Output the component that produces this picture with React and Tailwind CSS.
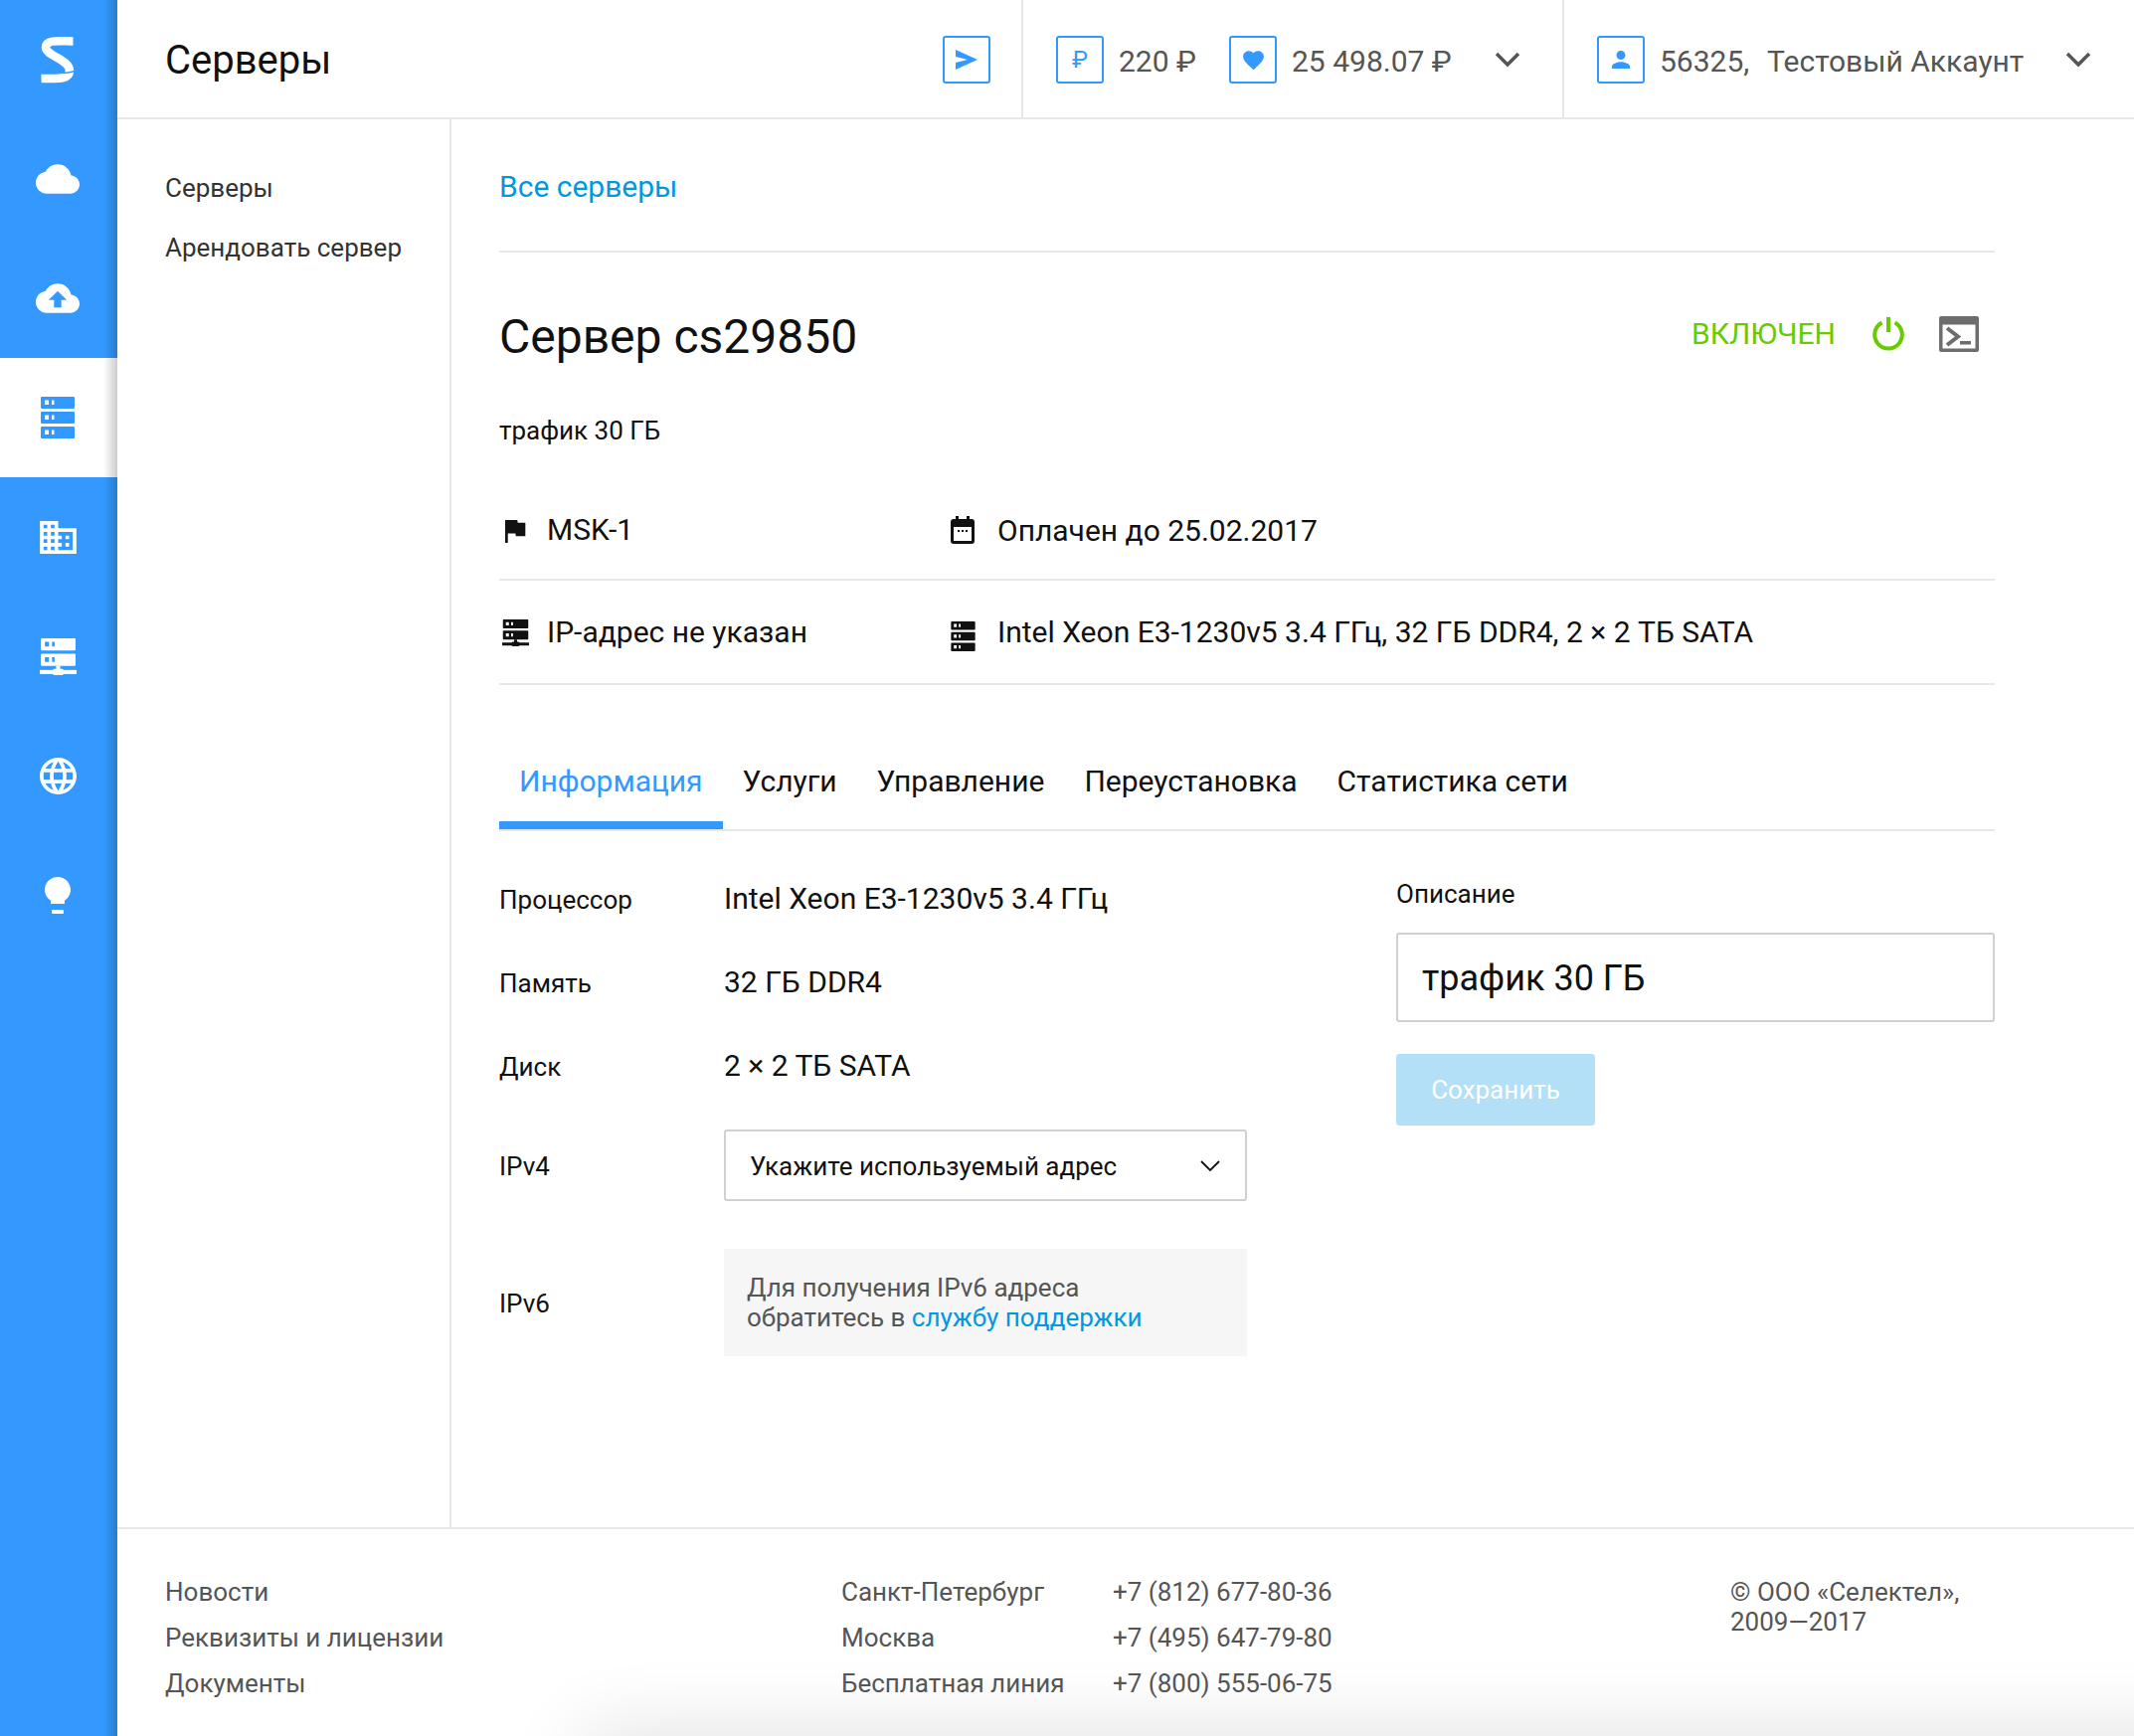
import React from "react";

const CLOUD = "M19.35 10.04C18.67 6.59 15.64 4 12 4 9.11 4 6.6 5.64 5.35 8.04 2.34 8.36 0 10.91 0 14c0 3.31 2.69 6 6 6h13c2.76 0 5-2.24 5-5 0-2.64-2.05-4.78-4.65-4.96z";
const bar = (y) => `M1 ${y}h32a1 1 0 0 1 1 1v10a1 1 0 0 1-1 1H1a1 1 0 0 1-1-1V${y + 1}a1 1 0 0 1 1-1z M4 ${y + 3.5}v4.5h4v-4.5z M11 ${y + 3.5}v4.5h2.5v-4.5z`;

function Dns({ className }) {
  return (
    <svg viewBox="0 0 34 42" className={className} fill="currentColor">
      <path fillRule="evenodd" d={`${bar(0)} ${bar(15)} ${bar(30)}`} />
    </svg>
  );
}
function Lan({ className }) {
  return (
    <svg viewBox="0 0 36 36" className={className} fill="currentColor">
      <path fillRule="evenodd" d={bar(0)} transform="translate(1 0)" />
      <path fillRule="evenodd" d={bar(15)} transform="translate(1 0)" />
      <rect x="16" y="27" width="4" height="5" />
      <rect x="0" y="31" width="36" height="4" />
      <rect x="13" y="30" width="10" height="6" rx="1" />
    </svg>
  );
}
function Side({ children, active }) {
  return (
    <div className={`h-[120px] pr-[2px] flex items-center justify-center ${active ? "bg-white text-[#3399ff]" : "text-white"}`}>
      {children}
    </div>
  );
}
function Box({ children }) {
  return (
    <div className="w-[48px] h-[48px] border-2 border-[#3399ff] rounded-[3px] flex items-center justify-center text-[#3399ff] shrink-0">
      {children}
    </div>
  );
}
function Chevron({ className }) {
  return (
    <svg viewBox="0 0 26 16" className={className} fill="none" stroke="#555555" strokeWidth="3.4">
      <path d="M2 2l11 11L24 2" />
    </svg>
  );
}
function InfoRow({ label, value }) {
  return (
    <div className="flex items-center h-[84px]">
      <div className="w-[226px] text-[26px] pt-[1px]">{label}</div>
      <div className="text-[30px] pb-[4px]">{value}</div>
    </div>
  );
}

export default function App() {
  return (
    <div className="flex w-[2146px] h-[1746px] overflow-hidden bg-white text-[#111111] font-[Roboto,sans-serif]">
      <aside className="relative w-[118px] shrink-0 bg-[#3399ff]">
        <Side>
          <svg viewBox="0 0 34 48" className="w-[34px] h-[48px]" fill="none" stroke="white" strokeWidth="8.5">
            <path d="M32.500 5.500C22 5.500 5 3 5 11.500 5 20 29 24 29 35 29 45 14 42.500 0.500 43" />
            <path d="M20 37.500C25 37.500 30 37 34 35.500" stroke="#3399ff" strokeWidth="1.600" />
          </svg>
        </Side>
        <Side>
          <svg viewBox="0 0 24 24" className="w-[44px] h-[44px]" fill="currentColor"><path d={CLOUD} /></svg>
        </Side>
        <Side>
          <svg viewBox="0 0 24 24" className="w-[44px] h-[44px]" fill="currentColor"><path fillRule="evenodd" d={`${CLOUD} M14 13v4h-4v-4H7l5-5 5 5h-3z`} /></svg>
        </Side>
        <Side active>
          <Dns className="w-[34px] h-[42px]" />
        </Side>
        <Side>
          <svg viewBox="2 3 20 18" className="w-[37px] h-[33px]" fill="currentColor"><path d="M12 7V3H2v18h20V7H12zM6 19H4v-2h2v2zm0-4H4v-2h2v2zm0-4H4V9h2v2zm0-4H4V5h2v2zm4 12H8v-2h2v2zm0-4H8v-2h2v2zm0-4H8V9h2v2zm0-4H8V5h2v2zm10 12h-8v-2h2v-2h-2v-2h2v-2h-2V9h8v10zm-2-8h-2v2h2v-2zm0 4h-2v2h2v-2z" /></svg>
        </Side>
        <Side>
          <Lan className="w-[37px] h-[37px]" />
        </Side>
        <Side>
          <svg viewBox="2 2 20 20" className="w-[37px] h-[37px]" fill="currentColor"><path d="M11.99 2C6.47 2 2 6.48 2 12s4.47 10 9.99 10C17.52 22 22 17.52 22 12S17.52 2 11.99 2zm6.93 6h-2.95c-.32-1.25-.78-2.45-1.38-3.56 1.84.63 3.37 1.91 4.33 3.56zM12 4.04c.83 1.2 1.48 2.53 1.91 3.96h-3.82c.43-1.43 1.08-2.76 1.91-3.96zM4.26 14C4.1 13.36 4 12.69 4 12s.1-1.36.26-2h3.38c-.08.66-.14 1.32-.14 2 0 .68.06 1.34.14 2H4.26zm.82 2h2.95c.32 1.25.78 2.45 1.38 3.56-1.84-.63-3.37-1.9-4.33-3.56zm2.95-8H5.08c.96-1.66 2.49-2.93 4.33-3.56C8.81 5.55 8.35 6.75 8.03 8zM12 19.96c-.83-1.2-1.48-2.53-1.91-3.96h3.82c-.43 1.43-1.08 2.76-1.91 3.96zM14.34 14H9.66c-.09-.66-.16-1.32-.16-2 0-.68.07-1.35.16-2h4.68c.09.65.16 1.32.16 2 0 .68-.07 1.34-.16 2zm.25 5.56c.6-1.11 1.06-2.31 1.38-3.56h2.95c-.96 1.65-2.49 2.93-4.33 3.56zM16.36 14c.08-.66.14-1.32.14-2 0-.68-.06-1.34-.14-2h3.38c.16.64.26 1.31.26 2s-.1 1.36-.26 2h-3.38z" /></svg>
        </Side>
        <Side>
          <svg viewBox="0 0 26 37" className="w-[26px] h-[37px]" fill="currentColor">
            <path d="M13 0C5.800 0 0 5.800 0 13c0 4.500 2.400 8.300 6 10.600V27h14v-3.400c3.600-2.300 6-6.100 6-10.600C26 5.800 20.200 0 13 0z" />
            <rect x="7" y="33" width="12" height="4" rx="1" />
          </svg>
        </Side>
        <div className="absolute inset-y-0 right-0 w-[14px] bg-linear-to-l from-black/20 to-transparent" />
      </aside>

      <div className="flex-1 flex flex-col min-w-0">
        <header className="h-[120px] shrink-0 border-b-2 border-[#e8e8e8] flex items-stretch text-[#555555]">
          <div className="w-[911px] flex items-center justify-between pl-[48px] pr-[31px] border-r-2 border-[#e8e8e8]">
            <div className="text-[40px] text-[#111111] pt-[4px]">Серверы</div>
            <div className="pt-[2px]">
              <Box>
                <svg viewBox="0 0 22 22" className="w-[22px] h-[22px]" fill="currentColor"><path d="M0 1l22 10L0 21l0-7 12-3L0 8z" /></svg>
              </Box>
            </div>
          </div>
          <div className="w-[544px] flex items-center pl-[33px] pt-[2px] border-r-2 border-[#e8e8e8]">
            <Box><span className="text-[24px] leading-none">₽</span></Box>
            <div className="ml-[15px] w-[111px] text-[30px] whitespace-nowrap pt-[3px]">220 ₽</div>
            <Box>
              <svg viewBox="0 0 24 24" className="w-[25px] h-[25px]" fill="currentColor"><path d="M12 21.350l-1.450-1.320C5.400 15.360 2 12.280 2 8.500 2 5.420 4.420 3 7.500 3c1.740 0 3.410.81 4.500 2.090C13.090 3.810 14.760 3 16.500 3 19.580 3 22 5.420 22 8.500c0 3.780-3.400 6.860-8.550 11.540L12 21.350z" /></svg>
            </Box>
            <div className="ml-[15px] w-[204px] text-[30px] whitespace-nowrap pt-[3px]">25 498.07 ₽</div>
            <Chevron className="w-[26px] h-[16px]" />
          </div>
          <div className="flex-1 flex items-center pl-[33px] pt-[2px]">
            <Box>
              <svg viewBox="4 4 16 16" className="w-[18px] h-[18px]" fill="currentColor"><path d="M12 12c2.210 0 4-1.790 4-4s-1.790-4-4-4-4 1.790-4 4 1.790 4 4 4zm0 2c-2.670 0-8 1.340-8 4v2h16v-2c0-2.660-5.330-4-8-4z" /></svg>
            </Box>
            <div className="ml-[15px] w-[408px] text-[30px] whitespace-pre pt-[3px]"><span className="mr-[3px]">56325,  </span>Тестовый Аккаунт</div>
            <Chevron className="w-[26px] h-[16px]" />
          </div>
        </header>

        <div className="flex-1 flex min-h-0">
          <nav className="w-[336px] shrink-0 border-r-2 border-[#e8e8e8] pl-[48px] pt-[39px] text-[26px] text-[#333333]">
            <div className="h-[60px] flex items-center">Серверы</div>
            <div className="h-[60px] flex items-center whitespace-nowrap">Арендовать сервер</div>
          </nav>
          <main className="w-[1504px] ml-[48px] shrink-0">
            <div className="h-[134px] border-b-2 border-[#e8e8e8] flex items-center text-[30px] text-[#0099dd] pt-[2px]">Все серверы</div>
            <div className="h-[169px] flex items-center justify-between">
              <h1 className="text-[48px]">Сервер cs29850</h1>
              <div className="flex items-center mr-[16px] -mt-[6px]">
                <span className="text-[30px] text-[#66cc00]">ВКЛЮЧЕН</span>
                <svg viewBox="0 0 34 34" className="w-[34px] h-[34px] ml-[36px]" fill="none" stroke="#66cc00" strokeWidth="4"><path d="M10.500 5.500a13.800 13.800 0 1 0 13 0M17 0v15" /></svg>
                <svg viewBox="0 0 40 36" className="w-[40px] h-[36px] ml-[34px]">
                  <path fill="#6d6d6d" fillRule="evenodd" d="M2 0h36a2 2 0 0 1 2 2v32a2 2 0 0 1-2 2H2a2 2 0 0 1-2-2V2a2 2 0 0 1 2-2zM3.500 8.500v24h33v-24z" />
                  <path d="M8 12l11 8.500-11 8.500" fill="none" stroke="#6d6d6d" strokeWidth="4" />
                  <rect x="21" y="25" width="11" height="3.500" fill="#6d6d6d" />
                </svg>
              </div>
            </div>
            <div className="h-[24px] flex items-center text-[26px] -mt-[2px]">трафик 30 ГБ</div>
            <div className="h-[137px] mt-[2px] border-b-2 border-[#e8e8e8] flex items-center pt-[38px] text-[30px]">
              <div className="w-[453px] flex items-center">
                <svg viewBox="5 4 15.5 17" className="w-[21px] h-[23px] ml-[6px] mr-[21px] mt-[2px]" fill="currentColor"><path d="M14.400 6L14 4H5v17h2v-7h5.600l.4 2h7V6z" /></svg>
                <span className="-mt-[2px]">MSK-1</span>
              </div>
              <div className="flex items-center">
                <svg viewBox="0 0 24 28" className="w-[24px] h-[28px] ml-[1px] mr-[23px] -mt-[2px]"><path fill="#111111" fillRule="evenodd" d="M5 0h3v3h8V0h3v3h2a3 3 0 0 1 3 3v19a3 3 0 0 1-3 3H3a3 3 0 0 1-3-3V6a3 3 0 0 1 3-3h2zM3 11v14h18V11z" /><rect x="7" y="14" width="2" height="2" fill="#111111" /><rect x="11" y="14" width="2" height="2" fill="#111111" /><rect x="15" y="14" width="2" height="2" fill="#111111" /></svg>
                <span>Оплачен до 25.02.2017</span>
              </div>
            </div>
            <div className="h-[105px] border-b-2 border-[#e8e8e8] flex items-center text-[30px]">
              <div className="w-[453px] flex items-center">
                <Lan className="w-[27px] h-[27px] ml-[3px] mr-[18px] mt-[2px]" />
                <span>IP-адрес не указан</span>
              </div>
              <div className="flex items-center">
                <Dns className="w-[25px] h-[30px] ml-[1px] mr-[22px] mt-[8px]" />
                <span>Intel Xeon E3-1230v5 3.4 ГГц, 32 ГБ DDR4, 2 × 2 ТБ SATA</span>
              </div>
            </div>
            <div className="h-[147px] mt-0 border-b-2 border-[#e8e8e8] flex items-end text-[30px]">
              <div className="h-[78px] px-5 flex items-start text-[#3399ff] border-b-[8px] border-[#3399ff] pt-[7px]">Информация</div>
              <div className="h-[78px] px-5 flex items-start pt-[7px]">Услуги</div>
              <div className="h-[78px] px-5 flex items-start pt-[7px]">Управление</div>
              <div className="h-[78px] px-5 flex items-start pt-[7px]">Переустановка</div>
              <div className="h-[78px] px-5 flex items-start pt-[7px]">Статистика сети</div>
            </div>
            <div className="flex justify-between pt-[27px]">
              <div className="w-[752px]">
                <InfoRow label="Процессор" value="Intel Xeon E3-1230v5 3.4 ГГц" />
                <InfoRow label="Память" value="32 ГБ DDR4" />
                <InfoRow label="Диск" value="2 × 2 ТБ SATA" />
                <div className="flex items-center mt-[21px]">
                  <div className="w-[226px] text-[26px] pt-[3px]">IPv4</div>
                  <div className="w-[526px] h-[72px] border-2 border-[#d0d0d0] rounded-[3px] flex items-center justify-between pl-[24px] pr-[25px] text-[26px]">
                    <span className="pt-[2px]">Укажите используемый адрес</span>
                    <svg viewBox="0 0 20 12" className="w-[20px] h-[12px] mt-[1px]" fill="none" stroke="#111111" strokeWidth="1.800"><path d="M1 1l9 9 9-9" /></svg>
                  </div>
                </div>
                <div className="flex items-center mt-[48px]">
                  <div className="w-[226px] text-[26px] pt-[3px]">IPv6</div>
                  <div className="w-[526px] h-[108px] bg-[#f6f6f6] px-[23px] flex flex-col justify-center text-[26px] leading-[30px] text-[#555555]">
                    <div>Для получения IPv6 адреса</div>
                    <div>обратитесь в <span className="text-[#0099dd]">службу поддержки</span></div>
                  </div>
                </div>
              </div>
              <div className="w-[602px]">
                <div className="h-[50px] pt-[22px] flex items-center text-[26px]">Описание</div>
                <div className="mt-[25px] h-[90px] border-2 border-[#d0d0d0] rounded-[3px] flex items-center pl-[24px] pt-[2px] text-[36px]">трафик 30 ГБ</div>
                <div className="mt-[32px] w-[200px] h-[72px] rounded-[3px] bg-[#b3e0f7] text-white text-[26px] flex items-center justify-center">Сохранить</div>
              </div>
            </div>
          </main>
        </div>

        <footer className="relative overflow-hidden h-[210px] shrink-0 border-t-2 border-[#e8e8e8] text-[26px] text-[#555555]">
          <div className="absolute left-[470px] -right-[200px] top-[208px] h-[60px] shadow-[0_0_80px_rgba(0,0,0,0.14)] bg-[#e8e8e8]" />
          <div className="relative flex pl-[48px] pt-[48px]">
            <div className="w-[680px] flex flex-col gap-[16px] leading-[30px]">
              <div>Новости</div>
              <div>Реквизиты и лицензии</div>
              <div>Документы</div>
            </div>
            <div className="w-[273px] flex flex-col gap-[16px] leading-[30px]">
              <div>Санкт-Петербург</div>
              <div>Москва</div>
              <div>Бесплатная линия</div>
            </div>
            <div className="w-[621px] flex flex-col gap-[16px] leading-[30px]">
              <div>+7 (812) 677-80-36</div>
              <div>+7 (495) 647-79-80</div>
              <div>+7 (800) 555-06-75</div>
            </div>
            <div className="leading-[30px]">
              <div>© ООО «Селектел»,</div>
              <div>2009—2017</div>
            </div>
          </div>
        </footer>
      </div>
    </div>
  );
}
